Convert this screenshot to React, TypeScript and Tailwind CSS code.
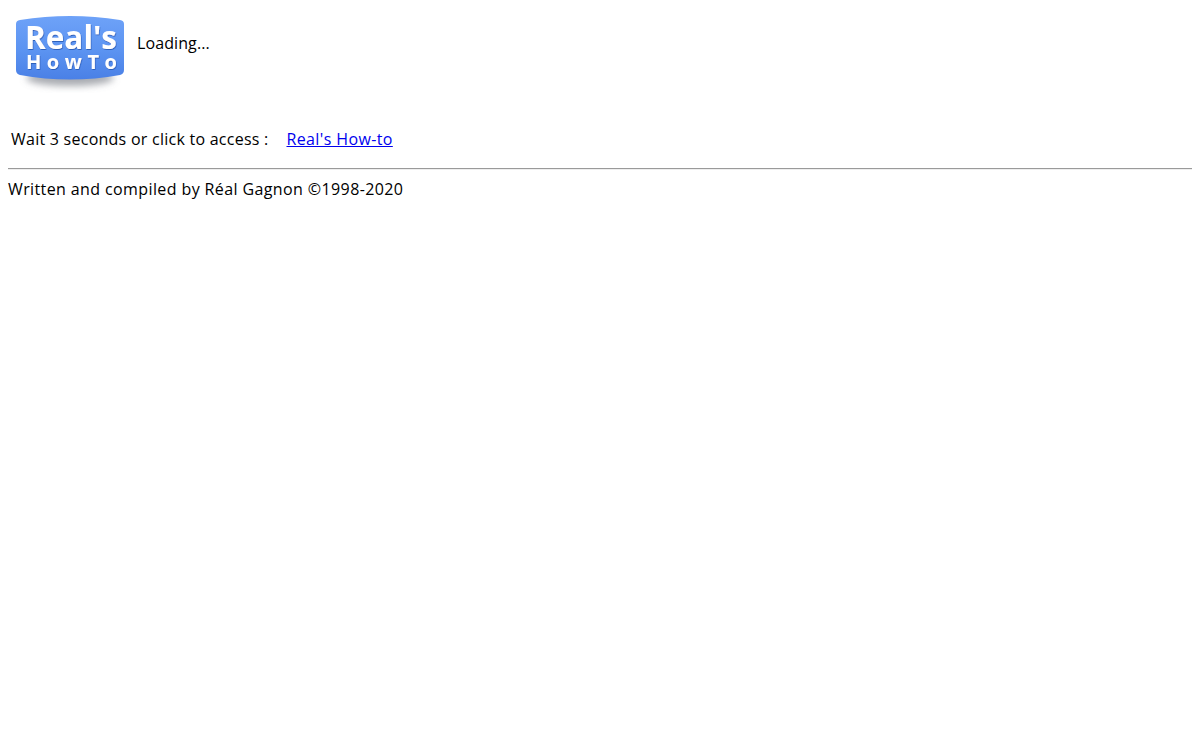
const font = { fontFamily: '"Open Sans", "Noto Sans", sans-serif' };

function Logo() {
  return (
    <svg width="120" height="90" viewBox="0 0 120 90" className="block shrink-0">
      <defs>
        <linearGradient id="logoFill" x1="0" y1="0" x2="0" y2="1">
          <stop offset="0" stopColor="#6ea2f8" />
          <stop offset="0.55" stopColor="#5b93f1" />
          <stop offset="1" stopColor="#4a80e6" />
        </linearGradient>
        <filter id="blur" x="-20%" y="-80%" width="140%" height="260%">
          <feGaussianBlur stdDeviation="3.5" />
        </filter>
        <filter id="textShadow" x="-10%" y="-10%" width="120%" height="130%">
          <feDropShadow dx="0.6" dy="1" stdDeviation="0.5" floodColor="#2a5cb5" floodOpacity="0.9" />
        </filter>
      </defs>
      <ellipse cx="62" cy="75" rx="44" ry="8" fill="#70757f" fillOpacity="0.6" filter="url(#blur)" />
      <path
        d="M8 21 Q8 17.5 12 17 Q62 9 112 17 Q116 17.5 116 21 V67 Q116 71 112 72 Q62 81 12 72 Q8 71 8 67 Z"
        fill="url(#logoFill)"
      />
      <g fill="#ffffff" filter="url(#textShadow)" style={{ fontFamily: '"Open Sans", sans-serif', fontWeight: 700 }}>
        <text x="17" y="45.5" fontSize="32" textLength="92" lengthAdjust="spacingAndGlyphs">
          Real's
        </text>
        <text x="18" y="66" fontSize="20" textLength="91" lengthAdjust="spacing">
          HowTo
        </text>
      </g>
    </svg>
  );
}

export default function App() {
  return (
    <div className="min-h-[740px] bg-white text-[16px] leading-[22px] text-black" style={font}>
      <div className="flex h-[90px] items-start pt-[3px] pl-[8px]">
        <Logo />
        <span className="mt-[29px] ml-[9px] tracking-[0.1px]">Loading...</span>
      </div>
      <div className="mt-[38px] flex pl-[11px]">
        <span className="tracking-[0.25px]">Wait 3 seconds or click to access :</span>
        <a href="#" className="ml-[18px] tracking-[0.38px] text-[#0000ee] underline">
          Real's How-to
        </a>
      </div>
      <hr className="mx-[8px] mt-[18px] border-0 border-t border-b border-t-[#9a9a9a] border-b-[#eeeeee]" />
      <p className="mt-[8px] pl-[8px] tracking-[0.39px]">Written and compiled by Réal Gagnon ©1998-2020</p>
    </div>
  );
}
